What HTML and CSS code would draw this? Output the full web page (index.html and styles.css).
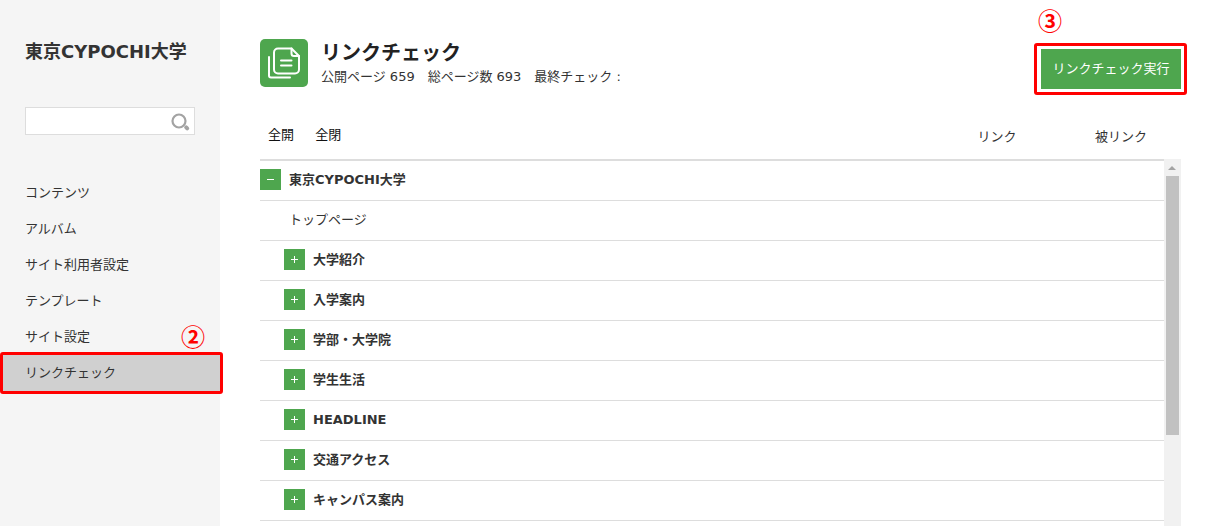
FILE: index.html
```html
<!DOCTYPE html>
<html lang="ja">
<head>
  <meta charset="UTF-8">
  <title>リンクチェック</title>
  <link rel="stylesheet" href="styles.css">
</head>
<body>

  <aside class="sidebar">
    <div class="site-name">東京CYPOCHI大学</div>
    <form class="search">
      <input type="search" class="search-input" aria-label="検索">
      <button type="button" class="search-button" aria-label="検索">
        <svg width="20" height="20" viewBox="0 0 20 20">
          <circle cx="8" cy="8" r="6.5" fill="none" stroke="#a3a3a3" stroke-width="2.2"/>
          <path d="M15.2 14.4l1 1" stroke="#a3a3a3" stroke-width="4" stroke-linecap="round"/>
        </svg>
      </button>
    </form>
    <nav class="menu">
      <a href="#">コンテンツ</a>
      <a href="#">アルバム</a>
      <a href="#">サイト利用者設定</a>
      <a href="#">テンプレート</a>
      <a href="#">サイト設定</a>
      <a href="#" class="active">リンクチェック<span class="mark mark-menu"></span><span class="num num-menu">②</span></a>
    </nav>
  </aside>

  <main class="main">
    <header class="page-header">
      <svg class="page-icon" width="48" height="48" viewBox="0 0 48 48">
        <rect width="48" height="48" rx="5" fill="#4ea64e"/>
        <g fill="none" stroke="#fff" stroke-width="2" stroke-linecap="round" stroke-linejoin="round">
          <path d="M31.500 9.500H18a4 4 0 0 0-4 4v17a4 4 0 0 0 4 4h17a4 4 0 0 0 4-4V17z"/>
          <path d="M31.500 9.500v5a2.500 2.500 0 0 0 2.500 2.500h5"/>
          <path d="M21 21.500h10.500M21 26.500h10.500"/>
          <path d="M9 18v18.500a2 2 0 0 0 2 2H30"/>
        </g>
      </svg>
      <div class="page-title">
        <h1>リンクチェック</h1>
        <p>公開ページ 659　総ページ数 693　最終チェック :</p>
      </div>
      <div class="run">
        <button type="button" class="run-button">リンクチェック実行</button>
        <span class="mark mark-run"></span>
        <span class="num num-run">③</span>
      </div>
    </header>

    <div class="tree">
      <table>
        <thead>
          <tr>
            <th class="col-name">
              <button type="button" class="text-button">全開</button>
              <button type="button" class="text-button">全閉</button>
            </th>
            <th class="col-link">リンク</th>
            <th class="col-back">被リンク</th>
          </tr>
        </thead>
        <tbody>
          <tr>
            <td><div class="node"><button type="button" class="toggle minus" aria-label="閉じる"></button>東京CYPOCHI大学</div></td>
            <td></td><td></td>
          </tr>
          <tr>
            <td><div class="node page">トップページ</div></td>
            <td></td><td></td>
          </tr>
          <tr>
            <td><div class="node child"><button type="button" class="toggle" aria-label="開く"></button>大学紹介</div></td>
            <td></td><td></td>
          </tr>
          <tr>
            <td><div class="node child"><button type="button" class="toggle" aria-label="開く"></button>入学案内</div></td>
            <td></td><td></td>
          </tr>
          <tr>
            <td><div class="node child"><button type="button" class="toggle" aria-label="開く"></button>学部・大学院</div></td>
            <td></td><td></td>
          </tr>
          <tr>
            <td><div class="node child"><button type="button" class="toggle" aria-label="開く"></button>学生生活</div></td>
            <td></td><td></td>
          </tr>
          <tr>
            <td><div class="node child"><button type="button" class="toggle" aria-label="開く"></button>HEADLINE</div></td>
            <td></td><td></td>
          </tr>
          <tr>
            <td><div class="node child"><button type="button" class="toggle" aria-label="開く"></button>交通アクセス</div></td>
            <td></td><td></td>
          </tr>
          <tr>
            <td><div class="node child"><button type="button" class="toggle" aria-label="開く"></button>キャンパス案内</div></td>
            <td></td><td></td>
          </tr>
        </tbody>
      </table>
      <div class="scrollbar">
        <div class="scroll-up"></div>
        <div class="scroll-thumb"></div>
      </div>
    </div>
  </main>

</body>
</html>
```

FILE: styles.css
```css
* {
  box-sizing: border-box;
}
body {
  display: flex;
  height: 100vh;
  margin: 0;
  overflow: hidden;
  background: #fff;
  color: #333;
  font-family: "DejaVu Sans", "Noto Sans CJK JP", sans-serif;
  font-size: 13px;
  line-height: 20px;
}
button {
  font: inherit;
  border: none;
  cursor: pointer;
}

/* sidebar */
.sidebar {
  flex: none;
  width: 220px;
  background: #f5f5f5;
}
.site-name {
  padding: 40px 25px 0;
  font-size: 18px;
  font-weight: bold;
  line-height: 24px;
}
.search {
  display: flex;
  height: 28px;
  margin: 43px 25px 40px;
  background: #fff;
  border: 1px solid #ddd;
}
.search-input {
  flex: 1;
  min-width: 0;
  padding: 0 6px;
  border: none;
  background: none;
  font: inherit;
}
.search-button {
  width: 25px;
  padding: 3px 2px 0 0;
  background: none;
  line-height: 0;
}
.menu a {
  display: block;
  position: relative;
  padding: 8px 25px;
  color: #333;
  text-decoration: none;
}
.menu .active {
  background: #d0d0d0;
}

/* numbered marks */
.mark {
  position: absolute;
  border: 3px solid #f00;
  border-radius: 3px;
  pointer-events: none;
}
.mark-menu {
  top: -3px;
  right: -3px;
  bottom: -3px;
  left: 0;
}
.mark-run {
  top: -6px;
  right: -6px;
  bottom: -6px;
  left: -7px;
}
.num {
  position: absolute;
  color: #f00;
  font-family: "Noto Sans CJK JP", sans-serif;
  font-size: 24px;
  font-weight: bold;
  line-height: 24px;
}
.num-menu {
  top: -31px;
  right: 15px;
}
.num-run {
  top: -41px;
  left: -3px;
}

/* main */
.main {
  flex: 1;
  padding: 39px 38px 0 40px;
}
.page-header {
  display: flex;
}
.page-icon {
  flex: none;
  margin-right: 13px;
}
.page-title {
  flex: 1;
}
.page-title h1 {
  margin: 0;
  color: #222;
  font-size: 20px;
  line-height: 28px;
}
.page-title p {
  margin: 0;
}
.run {
  position: relative;
  height: 40px;
  margin-top: 10px;
}
.run-button {
  min-width: 140px;
  height: 40px;
  padding: 0 10px;
  background: #4ea64e;
  color: #fff;
}

/* tree */
.tree {
  display: flex;
  height: calc(100vh - 97px);
  margin-top: 10px;
}
table {
  flex: 1;
  align-self: flex-start;
  border-collapse: separate;
  border-spacing: 0;
  table-layout: fixed;
}
th {
  height: 62px;
  padding: 16px 0 0;
  border-bottom: 2px solid #ddd;
  font-weight: normal;
}
.col-name {
  padding: 12px 0 0 8px;
  text-align: left;
}
.col-link {
  width: 162px;
}
.col-back {
  width: 86px;
}
.text-button {
  margin-right: 17px;
  padding: 0;
  background: none;
  color: #111;
}
td {
  height: 40px;
  padding: 0 0 2px;
  border-bottom: 1px solid #ddd;
}
.node {
  display: flex;
  align-items: center;
  gap: 8px;
  font-weight: bold;
}
.child {
  padding-left: 24px;
}
.page {
  padding-left: 29px;
  font-weight: normal;
}
.toggle {
  width: 21px;
  height: 21px;
  padding: 0;
  background:
    linear-gradient(#fff, #fff) center / 7px 1px no-repeat,
    linear-gradient(#fff, #fff) center / 1px 7px no-repeat,
    #4ea64e;
}
.minus {
  background: linear-gradient(#fff, #fff) center / 7px 1px no-repeat, #4ea64e;
}

/* scrollbar */
.scrollbar {
  flex: none;
  width: 17px;
  margin-top: 60px;
  background: #f1f1f1;
}
.scroll-up {
  height: 17px;
  padding: 7px 5px 0 4px;
}
.scroll-up::before {
  content: "";
  display: block;
  border: 4px solid transparent;
  border-top: none;
  border-bottom-color: #a3a3a3;
}
.scroll-thumb {
  height: 259px;
  margin: 0 2px;
  background: #c1c1c1;
}
```
